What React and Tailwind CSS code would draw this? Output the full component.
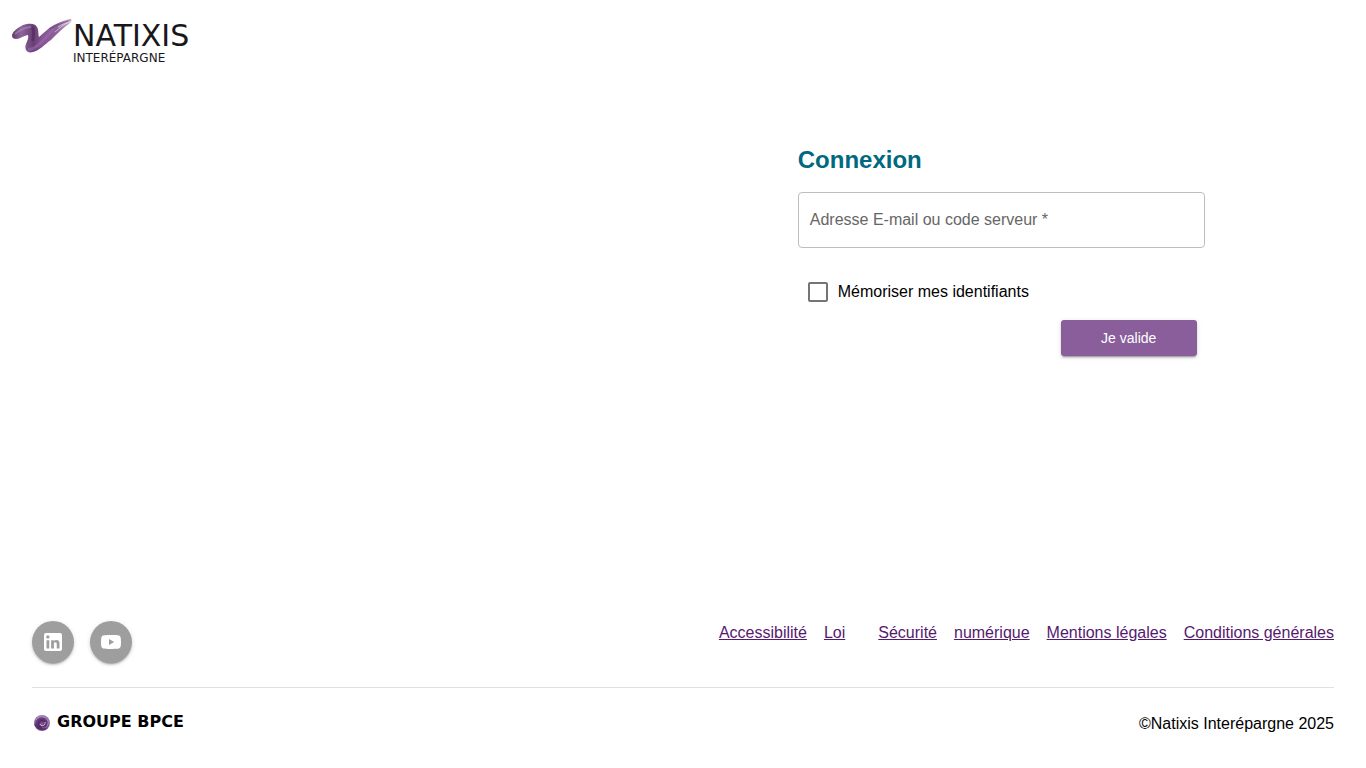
const FOOTER_LINKS = [
  { label: 'Accessibilité' },
  { label: 'Loi', spaced: true },
  { label: 'Sécurité' },
  { label: 'numérique' },
  { label: 'Mentions légales' },
  { label: 'Conditions générales' },
];

const SHADOW = 'shadow-[0_3px_1px_-2px_rgba(0,0,0,0.2),0_2px_2px_0_rgba(0,0,0,0.14),0_1px_5px_0_rgba(0,0,0,0.12)]';

function NatixisLogo() {
  return (
    <a href="#" className="inline-flex items-start text-[#1a171b]" aria-label="Natixis Interépargne">
      <svg viewBox="0 0 62 36" className="h-9 w-[62px]" aria-hidden="true">
        <defs>
          <linearGradient id="brush" x1="0" y1="0" x2="1" y2="0">
            <stop offset="0" stopColor="#5d3d69" />
            <stop offset="0.15" stopColor="#8f659c" />
            <stop offset="0.36" stopColor="#694076" />
            <stop offset="0.5" stopColor="#865494" />
            <stop offset="0.75" stopColor="#8d629a" />
            <stop offset="1" stopColor="#c0a9c6" />
          </linearGradient>
          <filter id="soft" x="-5%" y="-5%" width="110%" height="110%">
            <feGaussianBlur stdDeviation="0.6" />
          </filter>
        </defs>
        <g filter="url(#soft)">
          <path
            d="M1 18C1 14 6 10 12 7C18 5 24 5 26 9C28 12 27 16 28 19C33 15 37 10 43 7C49 4 54 2 59 1C61 1 61 3 59 5C52 10 47 15 40 22C34 26 28 33 22 34C16 36 13 31 15 26C16 23 18 20 17 17C14 17 9 21 5 21C3 21 1 20 1 18Z"
            fill="url(#brush)"
          />
          <path d="M4 16C9 12 14 9 20 9" stroke="#b393bd" strokeWidth="2" fill="none" opacity="0.5" />
          <path d="M21 9C25 13 21 19 22 23" stroke="#472452" strokeWidth="3" fill="none" opacity="0.5" />
          <path d="M17 32C27 31 33 20 43 11" stroke="#9d69ac" strokeWidth="3" fill="none" opacity="0.6" />
          <path d="M39 11C45 7 51 5 58 3" stroke="#5a3269" strokeWidth="1" fill="none" opacity="0.5" />
          <path d="M44 14C49 9 54 6 59 4M47 9C50 7 55 5 60 3" stroke="#fff" strokeWidth="1" fill="none" opacity="0.5" />
        </g>
      </svg>
      <span className="flex flex-col pt-0.5 font-['DejaVu_Sans',sans-serif]">
        <span className="text-[30px] leading-8">NATIXIS</span>
        <span className="text-xs leading-3">INTERÉPARGNE</span>
      </span>
    </a>
  );
}

function BpceLogo() {
  return (
    <div className="flex items-center gap-1.5 self-start pl-px">
      <svg viewBox="0 0 18 18" className="h-[18px] w-[18px]" aria-hidden="true">
        <defs>
          <radialGradient id="orb" cx="0.5" cy="0.55" r="0.5">
            <stop offset="0" stopColor="#8a62a0" />
            <stop offset="0.4" stopColor="#542866" />
            <stop offset="0.75" stopColor="#6d4082" />
            <stop offset="1" stopColor="#9b78aa" />
          </radialGradient>
        </defs>
        <circle cx="9" cy="10" r="8" fill="url(#orb)" />
        <path d="M3 7C6 2 13 3 15 8C16 12 13 16 9 15" fill="none" stroke="#c5aed0" strokeWidth="1" opacity="0.7" />
        <path d="M12 9C13 13 8 14 7 11" fill="none" stroke="#e3d9e8" strokeWidth="1" opacity="0.8" />
        <path d="M2 11C4 16 10 17 13 15" fill="none" stroke="#482059" strokeWidth="2" opacity="0.6" />
      </svg>
      <span className="font-['DejaVu_Sans',sans-serif] text-base leading-5 font-bold">GROUPE BPCE</span>
    </div>
  );
}

function SocialLink({ label, children }) {
  return (
    <a
      href="#"
      aria-label={label}
      className={`flex h-[42px] w-[42px] items-center justify-center rounded-full bg-[#9e9e9e] text-white ${SHADOW}`}
    >
      <svg viewBox="0 0 24 24" className="h-6 w-6" fill="currentColor" aria-hidden="true">
        {children}
      </svg>
    </a>
  );
}

function LoginForm() {
  return (
    <form className="ml-[58.4%] w-full max-w-[407px]" onSubmit={e => e.preventDefault()}>
      <h1 className="text-2xl font-bold text-[#006880]">Connexion</h1>
      <div className="relative mt-4">
        <input
          id="identifiant"
          type="text"
          required
          placeholder=" "
          className="peer block h-14 w-full rounded border border-[#bdbdbd] px-[11px] shadow-none outline-none focus:border-[#895e9b]"
        />
        {/* Floats onto the border once the field is focused or filled */}
        <label
          htmlFor="identifiant"
          className="pointer-events-none absolute top-4 left-3 bg-white text-[#666666] peer-focus:-top-2 peer-focus:text-xs peer-[:not(:placeholder-shown)]:-top-2 peer-[:not(:placeholder-shown)]:text-xs"
        >
          Adresse E-mail ou code serveur *
        </label>
      </div>
      <div className="mt-8 flex items-center gap-2.5 pl-2.5">
        <input
          id="memoriser"
          type="checkbox"
          className="h-5 w-5 appearance-none rounded-xs border-2 border-[#757575] checked:bg-[#895e9b]"
        />
        <label htmlFor="memoriser">Mémoriser mes identifiants</label>
      </div>
      <div className="mt-4 flex justify-end pr-2">
        <button type="submit" className={`h-9 w-[136px] rounded-[3px] bg-[#895e9b] text-sm text-white ${SHADOW}`}>
          Je valide
        </button>
      </div>
    </form>
  );
}

export default function App() {
  return (
    <div className="flex min-h-screen flex-col bg-white font-['Liberation_Sans',Arial,sans-serif] text-base text-black">
      <header className="h-20 px-[11px] pt-[18px]">
        <NatixisLogo />
      </header>

      <main className="flex flex-1 pt-16">
        <LoginForm />
      </main>

      <footer className="px-8 pb-8">
        <div className="flex items-start justify-between pb-6">
          <div className="flex gap-4">
            <SocialLink label="LinkedIn">
              <path d="M19 3a2 2 0 0 1 2 2v14a2 2 0 0 1-2 2H5a2 2 0 0 1-2-2V5a2 2 0 0 1 2-2h14m-.5 15.5v-5.3a3.26 3.26 0 0 0-3.26-3.26c-.85 0-1.84.52-2.32 1.3v-1.11h-2.79v8.37h2.79v-4.93c0-.77.62-1.4 1.39-1.4a1.4 1.4 0 0 1 1.4 1.4v4.93h2.79M6.88 8.56a1.68 1.68 0 0 0 1.68-1.68c0-.93-.75-1.69-1.68-1.69a1.69 1.69 0 0 0-1.69 1.69c0 .93.76 1.68 1.69 1.68m1.39 9.94v-8.37H5.5v8.37h2.77z" />
            </SocialLink>
            <SocialLink label="YouTube">
              <path d="M10 15l5.19-3L10 9v6m11.56-7.83c.13.47.22 1.1.28 1.9.07.8.1 1.49.1 2.09L22 12c0 2.19-.16 3.8-.44 4.83-.25.9-.83 1.48-1.73 1.73-.47.13-1.33.22-2.65.28-1.3.07-2.49.1-3.59.1L12 19c-4.19 0-6.8-.16-7.83-.44-.9-.25-1.48-.83-1.73-1.73-.13-.47-.22-1.1-.28-1.9-.07-.8-.1-1.49-.1-2.09L2 12c0-2.19.16-3.8.44-4.83.25-.9.83-1.48 1.73-1.73.47-.13 1.33-.22 2.65-.28 1.3-.07 2.49-.1 3.59-.1L12 5c4.19 0 6.8.16 7.83.44.9.25 1.48.83 1.73 1.73z" />
            </SocialLink>
          </div>
          <nav aria-label="Informations">
            <ul className="flex gap-[17px]">
              {FOOTER_LINKS.map(({ label, spaced }) => (
                <li key={label} className={spaced ? 'pr-4' : undefined}>
                  <a href="#" className="text-[#551a6f] underline">{label}</a>
                </li>
              ))}
            </ul>
          </nav>
        </div>
        <div className="flex items-center justify-between border-t border-[#e0e0e0] pt-6">
          <BpceLogo />
          <p>©Natixis Interépargne 2025</p>
        </div>
      </footer>
    </div>
  );
}
